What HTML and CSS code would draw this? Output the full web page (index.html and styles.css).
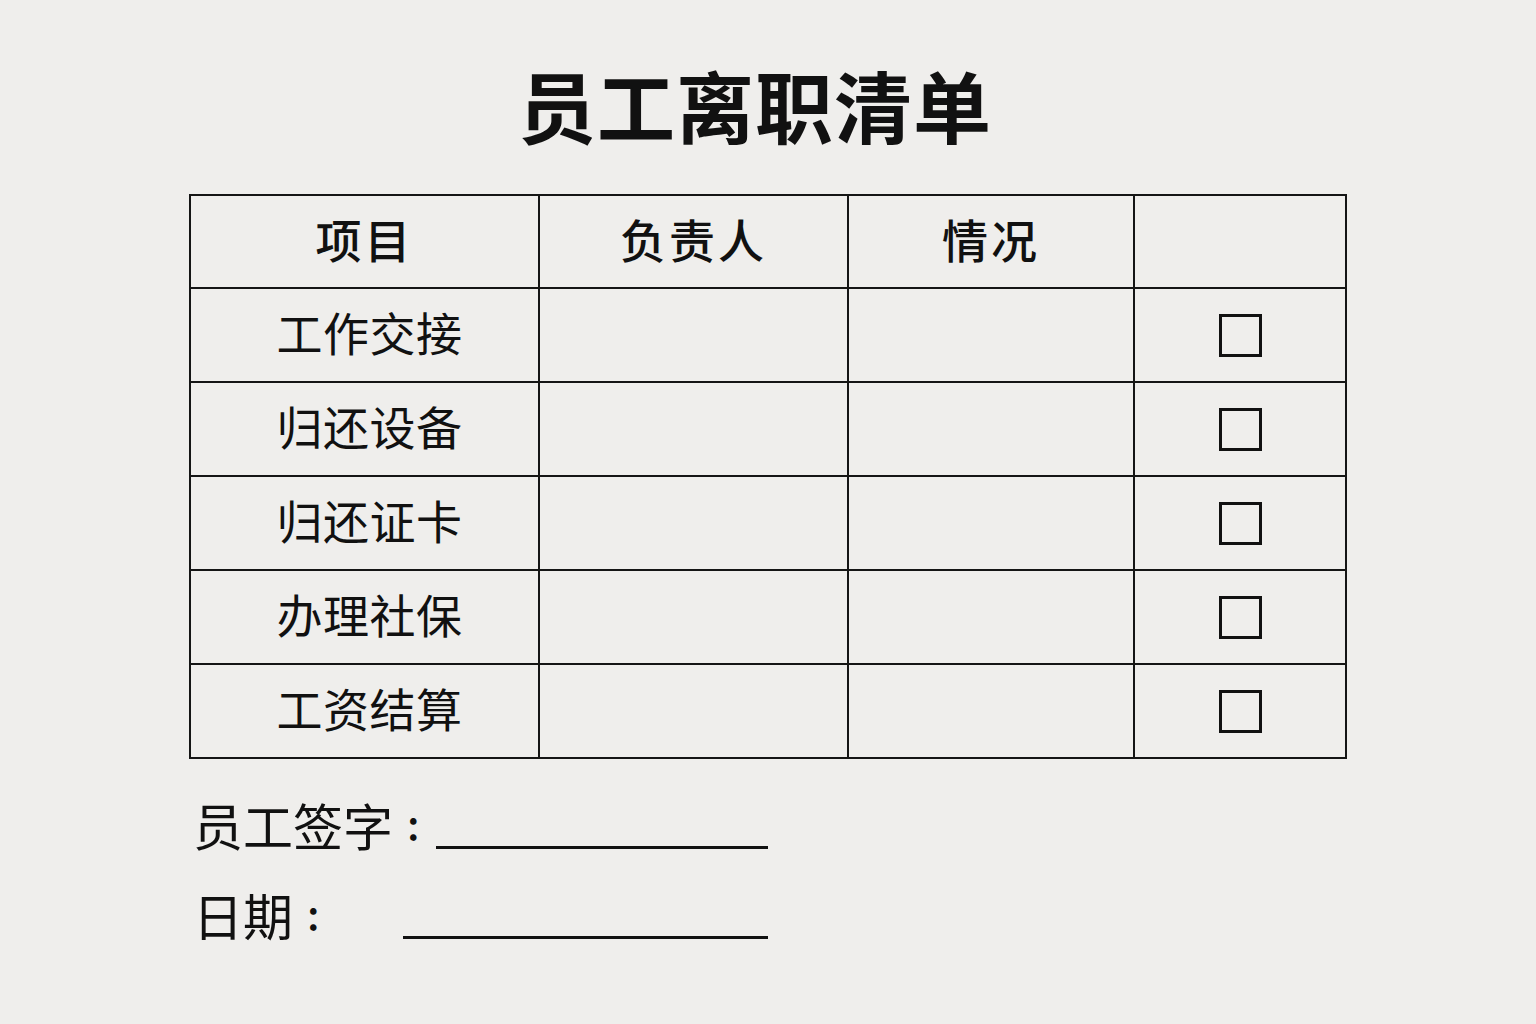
FILE: index.html
```html
<!DOCTYPE html>
<html lang="zh-CN">
<head>
<meta charset="utf-8">
<title>员工离职清单</title>
<link rel="stylesheet" href="styles.css">
</head>
<body>
<main class="page">
  <h1 class="title">员工离职清单</h1>
  <table class="sheet">
    <colgroup>
      <col class="c1"><col class="c2"><col class="c3"><col class="c4">
    </colgroup>
    <thead>
      <tr><th>项目</th><th>负责人</th><th>情况</th><th></th></tr>
    </thead>
    <tbody>
      <tr><td class="item">工作交接</td><td></td><td></td><td class="chk"><span class="box"></span></td></tr>
      <tr><td class="item">归还设备</td><td></td><td></td><td class="chk"><span class="box"></span></td></tr>
      <tr><td class="item">归还证卡</td><td></td><td></td><td class="chk"><span class="box"></span></td></tr>
      <tr><td class="item">办理社保</td><td></td><td></td><td class="chk"><span class="box"></span></td></tr>
      <tr><td class="item">工资结算</td><td></td><td></td><td class="chk"><span class="box"></span></td></tr>
    </tbody>
  </table>
  <div class="sign">
    <div class="sign-row"><span class="label">员工签字</span><span class="colon">:</span><span class="line line-a"></span></div>
    <div class="sign-row"><span class="label">日期</span><span class="colon">:</span><span class="line line-b"></span></div>
  </div>
</main>
</body>
</html>
```
FILE: styles.css
```css
html, body {
  margin: 0;
  padding: 0;
  background: #efeeec;
}
body {
  font-family: "Noto Sans CJK SC", "Noto Sans", sans-serif;
  color: #111;
}
.page {
  width: 1536px;
  height: 1024px;
  padding-top: 58px;
  box-sizing: border-box;
}
.title {
  margin: 0;
  text-align: center;
  font-size: 78px;
  line-height: 92px;
  font-weight: 700;
  letter-spacing: 1px;
  padding-right: 26px;
  height: 136px;
  box-sizing: border-box;
}
.sheet {
  margin-left: 189px;
  border-collapse: collapse;
  table-layout: fixed;
  width: 1156px;
}
.c1 { width: 349px; }
.c2 { width: 309px; }
.c3 { width: 286px; }
.c4 { width: 212px; }
.sheet th, .sheet td {
  border: 2px solid #151515;
  height: 84px;
  padding: 0 0 8px 0;
  text-align: center;
  vertical-align: middle;
  font-size: 46px;
  line-height: 1;
}
.sheet th {
  font-weight: 500;
  letter-spacing: 3px;
  padding-bottom: 7px;
}
.sheet td.item {
  font-weight: 400;
  padding-left: 10px;
  letter-spacing: 0.5px;
}
.box {
  display: inline-block;
  width: 37px;
  height: 37px;
  border: 3px solid #111;
  vertical-align: middle;
}
.sign {
  margin-left: 193px;
  width: 575px;
  padding-top: 0;
}
.sign-row {
  display: flex;
  align-items: flex-end;
  height: 90px;
  font-size: 50px;
  line-height: 1;
}
.colon {
  font-size: 42px;
  font-weight: 500;
  padding: 0 0 6px 14px;
}
.line {
  margin-left: auto;
  height: 3px;
  background: #111;
}
.line-a { width: 332px; }
.line-b { width: 365px; }
```
